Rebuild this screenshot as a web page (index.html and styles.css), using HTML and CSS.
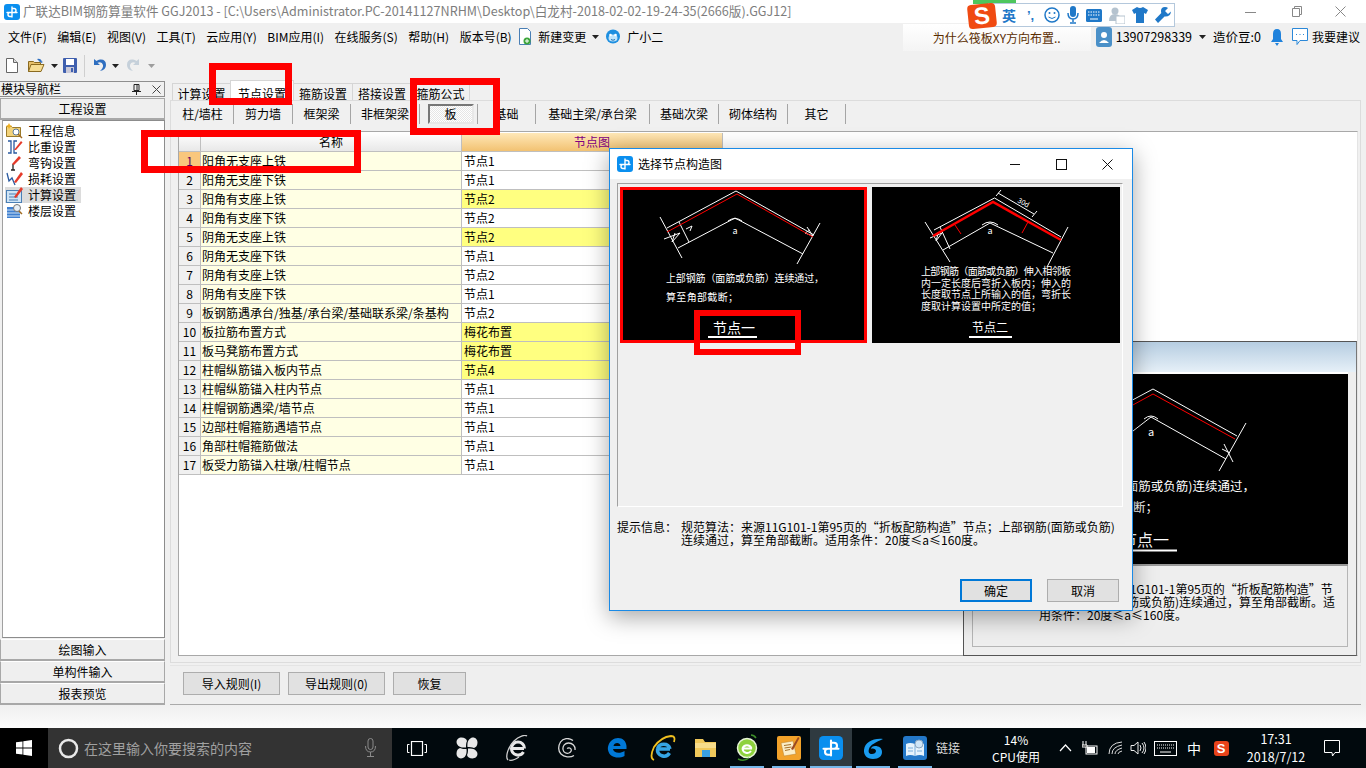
FILE: index.html
```html
<!DOCTYPE html>
<html lang="zh-CN">
<head>
<meta charset="utf-8">
<title>广联达BIM钢筋算量软件</title>
<link rel="stylesheet" href="styles.css">
</head>
<body>
<svg class="defs" aria-hidden="true">
  <symbol id="app" viewBox="0 0 16 16">
    <rect x="0" y="0" width="16" height="16" rx="3" fill="#0a8fef"/>
    <path d="M8 3v10M3 8.500h10M8 4.500h2a1.800 1.800 0 0 1 0 4M8 8.500H6a1.800 1.800 0 0 0 0 4h2" fill="none" stroke="#fff" stroke-width="1.400" stroke-linecap="round"/>
  </symbol>
  <symbol id="caret" viewBox="0 0 7 4"><path d="M0 0h7L3.500 4z" fill="#222"/></symbol>
</svg>
<div class="app">
  <header class="title">
    <svg class="ti-icon" width="16" height="16"><use href="#app"/></svg>
    <span class="ti-text">广联达BIM钢筋算量软件 GGJ2013 - [C:\Users\Administrator.PC-20141127NRHM\Desktop\白龙村-2018-02-02-19-24-35(2666版).GGJ12]</span>
    <span class="winbtns">
      <svg width="12" height="12"><path d="M0 6.500h11" stroke="#888"/></svg>
      <svg width="12" height="12"><path d="M2.500 2.500h7v8h-7zM4.500 2.500v-2h7v8h-2" fill="none" stroke="#888"/></svg>
      <svg width="12" height="12"><path d="M.5.500l10 10M10.500.500l-10 10" stroke="#888"/></svg>
    </span>
  </header>

  <nav class="menu">
    <span class="m">文件(F)</span><span class="m">编辑(E)</span><span class="m">视图(V)</span><span class="m">工具(T)</span><span class="m">云应用(Y)</span><span class="m">BIM应用(I)</span><span class="m">在线服务(S)</span><span class="m">帮助(H)</span><span class="m">版本号(B)</span>
    <svg class="m-ic1" width="14" height="18" viewBox="0 0 14 18"><path d="M1.500.500h8l3 3v13h-11z" fill="#fff" stroke="#4a7fb5"/><circle cx="9" cy="13" r="3.500" fill="#3da53a"/><path d="M9 11v4M7 13h4" stroke="#fff"/></svg>
    <span class="m-new">新建变更</span>
    <svg class="m-caret" width="7" height="4"><use href="#caret"/></svg>
    <svg class="m-ic2" width="16" height="16" viewBox="0 0 16 16"><circle cx="8" cy="7.500" r="7" fill="#1e8fe0"/><ellipse cx="8" cy="9" rx="4.500" ry="3.500" fill="#bfe4fb"/><circle cx="5.500" cy="6" r="1.300" fill="#fff"/><circle cx="10.500" cy="6" r="1.300" fill="#fff"/><path d="M6 10.500q2 1.500 4 0" stroke="#1e6fb0" fill="none"/></svg>
    <span class="m-gxe">广小二</span>
    <div class="m-right">
      <div class="ask">为什么筏板XY方向布置..</div>
      <svg class="m-user" width="16" height="20" viewBox="0 0 16 20"><rect width="16" height="20" rx="3" fill="#4a90c8"/><circle cx="8" cy="8" r="3" fill="#fff"/><path d="M3 16q5-6 10 0z" fill="#fff"/></svg>
      <span class="m-phone">13907298339</span>
      <svg class="m-caret2" width="7" height="4"><use href="#caret"/></svg>
      <span class="m-bean">造价豆:0</span>
      <svg class="m-bell" width="14" height="18" viewBox="0 0 14 18"><path d="M7 1q4 0 4 5v5l2 3H1l2-3V6q0-5 4-5zM5 15h4l-2 3z" fill="#1f82dc"/></svg>
      <svg class="m-chat" width="16" height="18" viewBox="0 0 16 18"><path d="M.5.500h15v12H8l-3 4v-4H.5z" fill="#fff" stroke="#2b88d8"/><path d="M4 6.500h1M7.500 6.500h1M11 6.500h1" stroke="#2b88d8"/></svg>
      <span class="m-sug">我要建议</span>
    </div>
  </nav>

  <div class="tools">
    <svg class="t1" width="12" height="15" viewBox="0 0 12 15"><path d="M.5.500h7l4 4v10H.5z" fill="#fff" stroke="#666"/><path d="M7.500.500v4h4" fill="#ddd" stroke="#666"/></svg>
    <svg class="t2" width="17" height="15" viewBox="0 0 17 15"><path d="M.5 3.500h5l1 1h6v9H.5z" fill="#e7c06a" stroke="#8a6a20"/><path d="M3 6.500h13l-3 7H.5z" fill="#f6dd94" stroke="#8a6a20"/><path d="M9 1q4-1 5 3l1-1-1 2-2-1z" fill="#2f6fc0"/></svg>
    <svg class="t-c1" width="7" height="4"><use href="#caret"/></svg>
    <svg class="t3" width="14" height="15" viewBox="0 0 14 15"><rect width="14" height="15" rx="1" fill="#3f5fae"/><rect x="3" y="1" width="8" height="6" fill="#fff"/><rect x="3" y="9" width="8" height="6" fill="#c9c9d8"/><rect x="8" y="10" width="2" height="4" fill="#3f5fae"/></svg>
    <span class="t-sep"></span>
    <svg class="t4" width="13" height="15" viewBox="0 0 13 15"><path d="M1 1v6h6L4.500 4.800Q9 3 10 7q.5 3-3 6 6-1 6-6 0-6-6-5.500-2 .2-3.500 1.500z" fill="#2f6fc0"/></svg>
    <svg class="t-c2" width="7" height="4"><use href="#caret"/></svg>
    <svg class="t5" width="13" height="15" viewBox="0 0 13 15"><path d="M12 1v6H6l2.500-2.200Q4 3 3 7q-.5 3 3 6-6-1-6-6 0-6 6-5.500 2 .2 3.500 1.500z" fill="#c5d0da"/></svg>
    <svg class="t-c3" width="7" height="4"><use href="#caret"/></svg>
  </div>

  <main class="main">
    <aside class="side">
      <div class="s-head"><span>模块导航栏</span>
        <svg class="s-pin" width="9" height="11" viewBox="0 0 9 11"><path d="M2 .500h5v6H2zM0 7.500h9M4.500 7.500V11M5 1v5" fill="none" stroke="#222"/></svg>
        <svg class="s-x" width="9" height="9" viewBox="0 0 9 9"><path d="M.5.500l8 8M8.500.500l-8 8" stroke="#444"/></svg>
      </div>
      <div class="s-btn s-top">工程设置</div>
      <ul class="s-list">
        <li class="s-it"><svg width="17" height="16" viewBox="0 0 17 16"><path d="M.5 3.500h5l1 1h8v9H.5z" fill="#f2d27a" stroke="#9a7a2a"/><circle cx="10" cy="9" r="3" fill="#fff" stroke="#5c7a9a"/><path d="M12 11l4 4" stroke="#a06a20" stroke-width="1.500"/><path d="M3 0l1 2 2 1-2 1-1 2-1-2-2-1 2-1z" fill="#f0b020"/></svg><span>工程信息</span></li>
        <li class="s-it"><svg width="17" height="16" viewBox="0 0 17 16"><path d="M2 2h3v12H2M11 14H8V2h3" fill="none" stroke="#2a5aa0" stroke-width="1.300"/><path d="M8 11L15 2l1.500 1.500L10 11z" fill="#e53a2a"/></svg><span>比重设置</span></li>
        <li class="s-it"><svg width="17" height="16" viewBox="0 0 17 16"><path d="M7 15V9M5 15h4" stroke="#222" stroke-width="1.300"/><path d="M6 9L13 1l2 2-7 7z" fill="#e53a2a"/></svg><span>弯钩设置</span></li>
        <li class="s-it"><svg width="17" height="16" viewBox="0 0 17 16"><path d="M1 2l2 8 3-3 3 7" fill="none" stroke="#2a5aa0" stroke-width="1.300"/><path d="M8 11L15 1l2 2-7 9z" fill="#e53a2a"/></svg><span>损耗设置</span></li>
        <li class="s-it s-sel"><svg width="17" height="16" viewBox="0 0 17 16"><rect x=".5" y="3.500" width="15" height="12" fill="#cfe4f5" stroke="#4a7fb5"/><path d="M3 7h7M3 10h9M3 13h9" stroke="#4a7fb5"/><path d="M8 10L15 0l2 2-7 9z" fill="#e53a2a"/></svg><span>计算设置</span></li>
        <li class="s-it"><svg width="17" height="16" viewBox="0 0 17 16"><path d="M1 4h13v11H1z" fill="#3f7fd0"/><path d="M1 7h13M1 10h13M1 13h13" stroke="#cfe4f5"/><circle cx="11" cy="5" r="3.500" fill="#e7eef5" stroke="#777"/><path d="M13 8l3 3" stroke="#a06a20" stroke-width="1.500"/></svg><span>楼层设置</span></li>
      </ul>
      <div class="s-btn">绘图输入</div>
      <div class="s-btn">单构件输入</div>
      <div class="s-btn">报表预览</div>
    </aside>

    <section class="content">
      <div class="tabs">
        <span class="tab t-a">计算设置</span><span class="tab t-b on">节点设置</span><span class="tab t-c">箍筋设置</span><span class="tab t-d">搭接设置</span><span class="tab t-e">箍筋公式</span>
      </div>
      <div class="panel">
        <div class="subs">
          <span class="sub w62">柱/墙柱</span><span class="sub w59">剪力墙</span><span class="sub w58">框架梁</span><span class="sub w69">非框架梁</span><span class="sub w58"><b class="press">板</b></span><span class="sub w58">基础</span><span class="sub w114">基础主梁/承台梁</span><span class="sub w69">基础次梁</span><span class="sub w69">砌体结构</span><span class="sub w58">其它</span>
        </div>
        <div class="work">
          <div class="grid">
            <div class="g-row g-head"><span class="c-n"></span><span class="c-name">名称</span><span class="c-val">节点图</span></div>
            <div class="g-row cur"><span class="c-n">1</span><span class="c-name">阳角无支座上铁</span><span class="c-val">节点1</span></div>
            <div class="g-row"><span class="c-n">2</span><span class="c-name">阳角无支座下铁</span><span class="c-val">节点1</span></div>
            <div class="g-row hl"><span class="c-n">3</span><span class="c-name">阳角有支座上铁</span><span class="c-val">节点2</span></div>
            <div class="g-row"><span class="c-n">4</span><span class="c-name">阳角有支座下铁</span><span class="c-val">节点2</span></div>
            <div class="g-row hl"><span class="c-n">5</span><span class="c-name">阴角无支座上铁</span><span class="c-val">节点2</span></div>
            <div class="g-row"><span class="c-n">6</span><span class="c-name">阴角无支座下铁</span><span class="c-val">节点1</span></div>
            <div class="g-row"><span class="c-n">7</span><span class="c-name">阴角有支座上铁</span><span class="c-val">节点2</span></div>
            <div class="g-row"><span class="c-n">8</span><span class="c-name">阴角有支座下铁</span><span class="c-val">节点1</span></div>
            <div class="g-row"><span class="c-n">9</span><span class="c-name">板钢筋遇承台/独基/承台梁/基础联系梁/条基构</span><span class="c-val">节点2</span></div>
            <div class="g-row hl"><span class="c-n">10</span><span class="c-name">板拉筋布置方式</span><span class="c-val">梅花布置</span></div>
            <div class="g-row hl"><span class="c-n">11</span><span class="c-name">板马凳筋布置方式</span><span class="c-val">梅花布置</span></div>
            <div class="g-row hl"><span class="c-n">12</span><span class="c-name">柱帽纵筋锚入板内节点</span><span class="c-val">节点4</span></div>
            <div class="g-row"><span class="c-n">13</span><span class="c-name">柱帽纵筋锚入柱内节点</span><span class="c-val">节点1</span></div>
            <div class="g-row"><span class="c-n">14</span><span class="c-name">柱帽钢筋遇梁/墙节点</span><span class="c-val">节点1</span></div>
            <div class="g-row"><span class="c-n">15</span><span class="c-name">边部柱帽箍筋遇墙节点</span><span class="c-val">节点1</span></div>
            <div class="g-row"><span class="c-n">16</span><span class="c-name">角部柱帽箍筋做法</span><span class="c-val">节点1</span></div>
            <div class="g-row"><span class="c-n">17</span><span class="c-name">板受力筋锚入柱墩/柱帽节点</span><span class="c-val">节点1</span></div>
          </div>
          <div class="preview">
            <div class="pv-bar"></div>
            <div class="pv-img">
              <svg class="pv-svg" width="376" height="192" viewBox="0 0 376 192">
                <g fill="none" stroke="#fff">
                  <path d="M60 80L181 15 265 62"/>
                  <path d="M80 120L179 43 254 85"/>
                  <path d="M274 49L247 97M252 70l9 18M250 75l8 4"/>
                  <path d="M172 45q7-6 14 0"/>
                </g>
                <path d="M60 86L181 20 263 65" fill="none" stroke="#f00"/>
                <text class="d-t" x="179" y="62" text-anchor="middle" font-size="11">a</text>
                <text class="d-t" x="283" y="117" text-anchor="end" font-size="12.500">上部钢筋(面筋或负筋)连续通过&#xFF0C;</text>
                <text class="d-t" x="186" y="138" text-anchor="end" font-size="12.500">算至角部截断&#xFF1B;</text>
                <text class="d-t" x="197" y="172" text-anchor="end" font-size="16">节点一</text>
                <path d="M115 176.500h90" stroke="#fff" stroke-width="2"/>
              </svg>
            </div>
            <div class="pv-text">规范算法&#xFF1A;来源11G101-1第95页的“折板配筋构造”节<br>点&#xFF1B;上部钢筋(面筋或负筋)连续通过&#xFF0C;算至角部截断。适<br>用条件&#xFF1A;20度≤a≤160度。</div>
          </div>
        </div>
      </div>
      <div class="bottom">
        <button class="b-btn w97">导入规则(I)</button>
        <button class="b-btn w97">导出规则(0)</button>
        <button class="b-btn w73">恢复</button>
      </div>
    </section>
  </main>

  <div class="tail"></div>

  <footer class="taskbar">
    <div class="tk-start"><svg width="16" height="16" viewBox="0 0 16 16"><path d="M0 2.300l6.500-.9v6.200H0zM7.300 1.300L16 0v7.600H7.300zM0 8.400h6.500v6.200L0 13.700zM7.300 8.400H16V16l-8.700-1.300z" fill="#fff"/></svg></div>
    <div class="tk-search">
      <svg width="21" height="21" viewBox="0 0 21 21"><circle cx="10.500" cy="10.500" r="8.500" fill="none" stroke="#e8e8e8" stroke-width="2.500"/></svg>
      <span class="tk-q">在这里输入你要搜索的内容</span>
      <svg class="tk-mic" width="11" height="20" viewBox="0 0 11 20"><rect x="3" y=".5" width="5" height="11" rx="2.500" fill="none" stroke="#8a8a8a"/><path d="M.5 8q0 6 5 6t5-6M5.500 14v4M2 18.500h7" fill="none" stroke="#8a8a8a"/></svg>
    </div>
    <div class="tb wide"><svg width="20" height="15" viewBox="0 0 20 15"><rect x="4.500" y=".5" width="11" height="14" fill="none" stroke="#fff" stroke-width="1.200"/><path d="M2.500 3.500H.5v8h2M17.500 3.500h2v8h-2" fill="none" stroke="#fff"/></svg></div>
    <div class="tb wide"><svg width="22" height="22" viewBox="0 0 22 22"><path d="M10 10.500C6 11 2.500 10 1 7 -.5 3.500 2 .5 5.500.5c3 0 5 1.500 5.500 3.500C10 6 10 8 10 10.500z" fill="#e8e8e8"/><path d="M11.500 10C11 6 12 2.500 15 1c3.500-1.500 6.500 1 6.500 4.500 0 3-1.500 5-3.500 5.500-2-1-4-1-6.500-1z" fill="#e8e8e8"/><path d="M12 11.500c4-.5 7.500.5 9 3.500 1.500 3.500-1 6.500-4.500 6.500-3 0-5-1.500-5.500-3.500 1-2 1-4 1-6.500z" fill="#e8e8e8"/><path d="M10.500 12c.5 4-.5 7.500-3.500 9-3.500 1.500-6.500-1-6.500-4.500 0-3 1.500-5 3.500-5.500 2 1 4 1 6.500 1z" fill="#e8e8e8"/></svg></div>
    <div class="tb wide"><svg width="22" height="26" viewBox="0 0 22 26"><path d="M5 13.500h13M5.500 13.500a6.500 6.500 0 0 1 13 0M5.500 13.500a6.500 6.500 0 0 0 12 3.500" fill="none" stroke="#e8e8e8" stroke-width="3"/><path d="M2 25C-1 22 2 12 8 6 13 1 19-.5 21 1M3 25c3 1 7-1 10-3" fill="none" stroke="#d0d0d0" stroke-width="1.300"/></svg></div>
    <div class="tb wide"><svg width="20" height="20" viewBox="0 0 20 20"><path d="M16 2.500C12-.5 6 0 3.500 4S1 13 4 16s9 4 13 1.500M18 12c.5-4-2.500-7-6.500-7-3.500 0-6 3-5.500 6.500.5 3 3.500 4.500 6 3.500 1.800-.7 2.800-2.500 2-4-.8-1.300-3-1.500-3.800-.3" fill="none" stroke="#d8d8d8" stroke-width="1.300"/></svg></div>
    <div class="tb wide"><svg width="20" height="20" viewBox="0 0 20 20"><path d="M1 9C2 3 7 0 11 0c5 0 8 3 8.500 8v3H6c.3 4 7 5 11.500 2v5c-6 3-15 2-16.500-6-.2-1.500-.2-2 0-3zm5.500-1h7c-.2-4-6.500-4-7 0z" fill="#0078d7"/></svg></div>
    <div class="tb"><svg width="26" height="26" viewBox="0 0 26 26"><path d="M7 14h13M7.500 14a6.500 6.500 0 0 1 12.500 0M7.500 14a6.500 6.500 0 0 0 12 4" fill="none" stroke="#35a5e5" stroke-width="3.500"/><path d="M4 25Q-1 23 4 12 11 2 21 1q5 0 3 6" fill="none" stroke="#f0c020" stroke-width="1.800"/></svg></div>
    <div class="tb"><svg width="23" height="20" viewBox="0 0 23 20"><path d="M1 1h8l2 3h11v15H1z" fill="#f0c85a"/><rect x="8" y="12" width="8" height="7" fill="#3aa0e0"/><rect x="1" y="5" width="21" height="5" fill="#f7dc8a"/></svg></div>
    <div class="tb open"><svg width="22" height="28" viewBox="0 0 22 28"><circle cx="11" cy="14" r="9.500" fill="#8ed23e" stroke="#e8f5d8" stroke-width="1.500"/><path d="M6 14.500h10M6.500 14.500a4.700 4.700 0 0 1 9 0M6.500 14.500a4.700 4.700 0 0 0 8.500 2.500" fill="none" stroke="#fff" stroke-width="2"/><path d="M2 25q6 3 11-1M15 1q3 0 5 3" fill="none" stroke="#3e8e2a" stroke-width="1.500"/></svg></div>
    <div class="tb open"><svg width="24" height="24" viewBox="0 0 24 24"><rect width="24" height="24" rx="2" fill="#f2a22a"/><path d="M4 7l12-2 3 13-12 2z" fill="#fbeec8" stroke="#b8812a" stroke-width=".5"/><path d="M7 9.500l7-1M7.500 12l7-1M8 14.500l5-1" stroke="#a5702a"/><path d="M14 13L21 1l1.500 1L16 14z" fill="#9c4a20"/></svg></div>
    <div class="tb open act"><svg width="24" height="24"><use href="#app"/></svg></div>
    <div class="tb open"><svg width="24" height="24" viewBox="0 0 24 24"><path d="M22 3C12 2 4 6 3 14c-.5 5 3 9 9 9 6 0 9-3 9-7 0-4-3-6-7-6-2 0-4 1-4 3 2-1 5 0 5 2 0 2-2 3-4 3-3 0-4-2-3-5 1-4 7-7 14-10z" fill="#1a9cf0"/></svg></div>
    <div class="tb open"><svg width="24" height="24" viewBox="0 0 24 24"><rect width="24" height="24" rx="3" fill="#2478c8"/><path d="M3 8q4-2 9 0 5-2 9 0v12q-4-2-9 0-5-2-9 0z" fill="#e6f3fc"/><path d="M12 8v12" stroke="#7aaedc"/><path d="M5 12h5M5 15h5M14 15h5" stroke="#7aaedc"/><circle cx="16" cy="8" r="4" fill="#cfe6f8" stroke="#8fa8c0"/></svg></div>
    <div class="tray-link">链接</div>
    <div class="tray-cpu"><div>14%</div><div>CPU使用</div></div>
    <div class="ty w24"><svg width="13" height="8" viewBox="0 0 13 8"><path d="M1 7l5.500-6L12 7" fill="none" stroke="#fff" stroke-width="1.200"/></svg></div>
    <div class="ty w26"><svg width="16" height="14" viewBox="0 0 16 14"><rect x="4" y="5" width="11" height="8" fill="none" stroke="#fff"/><rect x="5" y="6" width="8" height="6" fill="#fff"/><path d="M1 0v4M4 0v4M0 4h5v2H0z" stroke="#fff"/></svg></div>
    <div class="ty w26"><svg width="16" height="14" viewBox="0 0 16 14"><path d="M1 13Q1 2 14 1M4 13Q4 6 14 4M7 13Q7 9 14 7M10 13q0-2 4-3" fill="none" stroke="#ddd"/></svg></div>
    <div class="ty w18"><svg width="16" height="14" viewBox="0 0 16 14"><path d="M1 4.500h3L8 1v12L4 9.500H1zM10 4q2 3 0 6M12 2q4 5 0 10M14 1q4 6 0 12" fill="none" stroke="#eee"/></svg></div>
    <div class="ty w36"><svg width="23" height="15" viewBox="0 0 23 15"><rect x=".5" y=".5" width="22" height="14" fill="none" stroke="#fff"/><path d="M3 4h17M3 7h17" stroke="#fff" stroke-dasharray="1 1"/><path d="M6 11h11" stroke="#fff"/></svg></div>
    <div class="ty w22 zh">中</div>
    <div class="ty w32"><span class="tk-s">S</span></div>
    <div class="clock"><div>17:31</div><div>2018/7/12</div></div>
    <div class="ty w34"><svg width="16" height="17" viewBox="0 0 16 17"><path d="M.5.500h15v12H11L8.500 16 8 12.500H.5z" fill="none" stroke="#fff"/></svg></div>
  </footer>
</div>

<section class="dialog">
  <div class="d-title">
    <svg width="16" height="16"><use href="#app"/></svg>
    <span class="d-name">选择节点构造图</span>
    <span class="d-btns">
      <svg width="11" height="11"><path d="M0 5.500h10" stroke="#111"/></svg>
      <svg width="11" height="11"><rect x=".5" y=".5" width="10" height="10" fill="none" stroke="#111"/></svg>
      <svg width="11" height="11"><path d="M.5.500l10 10M10.500.500l-10 10" stroke="#111"/></svg>
    </span>
  </div>
  <div class="d-body">
    <div class="d-list">
      <div class="thumb sel">
        <svg width="241" height="150" viewBox="3 3 241 150">
          <g fill="none" stroke="#fff">
            <path d="M47 41L116 4 194 48"/>
            <path d="M58 61L115 31 183 67"/>
            <path d="M40 30L62 71M200 36L177 77"/>
            <path d="M59 35l10 20M108 34q7-5 14 0"/>
            <path d="M44 52l16-6-8 9 3-9M187 40l6 9-8-3 5-3M66 42l6-3-2 5"/>
          </g>
          <path d="M47 45L117 7 193 50" fill="none" stroke="#f00"/>
          <text class="d-t" x="115" y="47" text-anchor="middle" font-size="9">a</text>
          <text class="d-t" x="46" y="95" font-size="10" textLength="158">上部钢筋&#xFF08;面筋或负筋&#xFF09;连续通过&#xFF0C;</text>
          <text class="d-t" x="46" y="114" font-size="10" textLength="72">算至角部截断&#xFF1B;</text>
          <text class="d-t" x="93" y="146" font-size="14">节点一</text>
          <path d="M88 150h49" stroke="#fff" stroke-width="2"/>
        </svg>
      </div>
      <div class="thumb">
        <svg width="248" height="156" viewBox="0 0 248 156">
          <g fill="none" stroke="#fff">
            <path d="M62 43L122.500 11 189 50"/>
            <path d="M71 63L118 36 181 66"/>
            <path d="M53 35L78 75M196 40L175 80"/>
            <path d="M126 6l36 21M129 3l-5 6M165 24l-5 6M68 40l10 22M110 38q8-6 16 0"/>
            <path d="M58 51l12-5-6 8 2-7"/>
          </g>
          <path d="M61 49L121 15 189 53" fill="none" stroke="#f00" stroke-width="2.500"/>
          <path d="M83 38l6 9M156 35l-6 11" fill="none" stroke="#f00"/>
          <text class="d-t" x="118" y="47" text-anchor="middle" font-size="9">a</text>
          <text class="d-t" x="145" y="15" font-size="7" transform="rotate(28 145 15)">30d</text>
          <text class="d-t" x="49" y="88" font-size="10" textLength="150">上部钢筋&#xFF08;面筋或负筋&#xFF09;伸入相邻板</text>
          <text class="d-t" x="49" y="99.500" font-size="10" textLength="150">内一定长度后弯折入板内&#xFF1B;伸入的</text>
          <text class="d-t" x="49" y="111" font-size="10" textLength="150">长度取节点上所输入的值&#xFF0C;弯折长</text>
          <text class="d-t" x="49" y="122.500" font-size="10" textLength="120">度取计算设置中所定的值&#xFF1B;</text>
          <text class="d-t" x="100" y="145" font-size="12">节点二</text>
          <path d="M97 150h43" stroke="#fff" stroke-width="2"/>
        </svg>
      </div>
    </div>
    <div class="d-hint">
      <span class="d-label">提示信息&#xFF1A;</span>
      <span class="d-msg">规范算法&#xFF1A;来源11G101-1第95页的“折板配筋构造”节点&#xFF1B;上部钢筋(面筋或负筋)<br>连续通过&#xFF0C;算至角部截断。适用条件&#xFF1A;20度≤a≤160度。</span>
    </div>
    <div class="d-foot">
      <button class="d-btn ok">确定</button>
      <button class="d-btn">取消</button>
    </div>
  </div>
</section>

<div class="mark m1"></div>
<div class="mark m2"></div>
<div class="mark m3"></div>
<div class="mark m4"></div>

<div class="sogou">
  <span class="sg-green"></span>
  <span class="sg-logo">S</span>
  <span class="sg-bar">
    <b class="sg-en">英</b>
    <b class="sg-p">&#8217;,</b>
    <svg width="16" height="16" viewBox="0 0 16 16"><circle cx="8" cy="8" r="7" fill="#fff" stroke="#1f78c8" stroke-width="1.500"/><circle cx="5.500" cy="6" r="1" fill="#1f78c8"/><circle cx="10.500" cy="6" r="1" fill="#1f78c8"/><path d="M4.500 10q3.500 3 7 0" fill="none" stroke="#1f78c8"/></svg>
    <svg width="12" height="18" viewBox="0 0 12 18"><rect x="3" y="0" width="6" height="11" rx="3" fill="#1f78c8"/><path d="M1 7q0 6 5 6t5-6M6 13v3M3 17h6" fill="none" stroke="#1f78c8" stroke-width="1.500"/></svg>
    <svg width="16" height="13" viewBox="0 0 16 13"><rect width="16" height="13" rx="1.500" fill="#1f78c8"/><path d="M2 3h12M2 6h12" stroke="#fff" stroke-dasharray="1.500 1"/><path d="M4 10h8" stroke="#fff"/></svg>
    <svg width="16" height="17" viewBox="0 0 16 17"><circle cx="6" cy="4" r="3.500" fill="#b5c3cf"/><path d="M0 14q0-7 6-7t6 7z" fill="#b5c3cf"/><rect x="7" y="9" width="9" height="8" fill="#fff" stroke="#b5c3cf"/></svg>
    <svg width="16" height="16" viewBox="0 0 16 16"><path d="M5 0L0 3l2 4 2-1v10h8V6l2 1 2-4-5-3q-3 2-6 0z" fill="#1f78c8"/></svg>
    <svg width="16" height="16" viewBox="0 0 16 16"><path d="M10 0q-4 0-4 4 0 1 .3 2L0 12.500 3 16l6.500-6.500q6 .5 6.500-5l-3 2.500-3-3 3-3q-1-1-3-1z" fill="#1f78c8"/></svg>
  </span>
</div>
</body>
</html>
```

FILE: styles.css
```css
* { box-sizing: border-box; }
html, body { margin: 0; padding: 0; }
body {
  width: 1366px; height: 768px; overflow: hidden; position: relative;
  background: #f0f0f0; color: #000;
  font: 12px/1 "Noto Sans CJK SC", "Liberation Sans", sans-serif;
}
.defs { position: absolute; width: 0; height: 0; }
svg { display: block; flex: none; }
.app { display: flex; flex-direction: column; height: 768px; }

/* title */
.title { height: 23px; background: #fff; display: flex; align-items: center; padding-left: 4px; flex: none; }
.ti-text { margin-left: 3px; color: #7d7d7d; font-size: 12.6px; white-space: nowrap; }
.winbtns { margin-left: auto; display: flex; gap: 33px; padding-right: 19px; }

/* menu */
.menu { height: 28px; display: flex; align-items: center; padding-left: 8px; flex: none; background: #f0f0f0; }
.m { margin-right: 10.5px; white-space: nowrap; }
.m-ic1 { margin-left: -4px; }
.m-new { margin-left: 6px; }
.m-caret { margin-left: 6px; }
.m-ic2 { margin-left: 6px; }
.m-gxe { margin-left: 6px; }
.m-right { margin-left: auto; display: flex; align-items: center; height: 28px; padding-right: 6px; }
.ask { width: 188px; height: 27px; background: linear-gradient(#fff, #f4f4f4); color: #5a2d00; font-size: 12px; text-align: center; line-height: 27px; }
.m-user { margin-left: 5px; }
.m-phone { margin-left: 4px; font-size: 12.5px; }
.m-caret2 { margin-left: 7px; }
.m-bean { margin-left: 7px; font-size: 12.5px; }
.m-bell { margin-left: 9px; }
.m-chat { margin-left: 8px; }
.m-sug { margin-left: 4px; font-size: 12px; }

/* toolbar */
.tools { height: 29px; display: flex; align-items: center; padding-left: 6px; flex: none; }
.t2 { margin-left: 10px; }
.t-c1 { margin-left: 6px; }
.t3 { margin-left: 5px; }
.t-sep { width: 1px; height: 22px; background: #cfcfcf; margin-left: 7px; }
.t4 { margin-left: 8px; }
.t-c2 { margin-left: 6px; }
.t5 { margin-left: 8px; }
.t-c3 { margin-left: 8px; opacity: .4; }

/* main */
.main { flex: 1; display: flex; min-height: 0; }
.side { width: 165px; flex: none; display: flex; flex-direction: column; padding: 1px 0 1px; }
.s-head { height: 16px; display: flex; align-items: center; border: 1px solid #8e8e8e; border-left: 0; padding-left: 1px; margin-bottom: 1px; }
.s-pin { margin-left: auto; }
.s-x { margin: 0 3px 0 11px; }
.s-btn { height: 22px; flex: none; display: flex; align-items: center; justify-content: center; border: 1px solid #a8a8a8; border-top-color: #fff; background: #efefef; box-shadow: inset 0 -1px 0 #a8a8a8; }
.s-top { border-top-color: #a8a8a8; }
.s-list { flex: 1; margin: 0 0 1px 2px; padding: 2px 2px; list-style: none; background: #fff; border: 1px solid #8c8c8c; border-left-color: #a0a0a0; width: 163px; }
.s-it { height: 16px; display: flex; align-items: center; gap: 5px; padding-left: 1px; width: 76px; white-space: nowrap; }
.s-sel { background: #dcdcdc; }

.content { flex: 1; min-width: 0; display: flex; flex-direction: column; padding: 0 5px 1px; }
.tabs { height: 20px; display: flex; align-items: flex-end; padding-left: 2px; flex: none; }
.tab { height: 17px; display: flex; align-items: center; justify-content: center; background: #f0f0f0; border: 1px solid #d5d5d5; border-bottom: 0; margin-right: -1px; padding-top: 3px; }
.t-a { width: 59px; } .t-b { width: 64px; } .t-c { width: 60px; } .t-d { width: 60px; } .t-e { width: 59px; }
.tab.on { background: #fff; height: 20px; padding-top: 6px; }
.panel { height: 563px; flex: none; border: 1px solid #dcdcdc; display: flex; flex-direction: column; padding: 3px 2px 0 0; }
.subs { height: 20px; display: flex; background: #f0f0f0; margin-left: 1px; flex: none; }
.sub { display: flex; align-items: center; justify-content: center; border-right: 1px solid #a5a5a5; height: 20px; font-size: 12px; }
.w58 { width: 58px; } .w59 { width: 59px; } .w62 { width: 62px; } .w69 { width: 69px; } .w114 { width: 114px; }
.press { font-weight: 400; width: 46px; height: 20px; margin-left: 4px; border: 2px solid #777; border-color: #777 #e8e8e8 #e8e8e8 #777; background: repeating-conic-gradient(#fff 0 25%, #e6e6e6 0 50%) 0 0 / 2px 2px; display: flex; align-items: center; justify-content: center; }

.work { flex: none; height: 525px; margin: 7px 0 0 7px; background: #fff; border: 1px solid #a8a8a8; border-right-color: #e4e4e4; display: flex; align-items: flex-end; justify-content: space-between; }
.grid { align-self: flex-start; margin-top: 1px; width: 544px; }
.g-row { display: flex; height: 19px; }
.g-row span { display: flex; align-items: center; border-right: 1px solid #bfbfbf; border-bottom: 1px solid #bfbfbf; white-space: nowrap; }
.c-n { width: 22px; justify-content: center; background: #f0f0f0; }
.c-name { width: 261px; padding-left: 1px; background: #ffffe4; }
.c-val { width: 261px; padding-left: 2px; background: #fff; }
.g-head span { background: linear-gradient(#fff, #e8e8e8); justify-content: center; }
.g-head .c-name { padding-left: 0; }
.g-head .c-val { background: linear-gradient(#ffe8b8, #f2c272); color: #800080; padding: 0; }
.hl .c-val { background: linear-gradient(90deg, #ffff80, #ffff80 85%, #f0f0a0); }
.cur .c-n { background: #f9c77d; color: #600060; }

.preview { width: 394px; height: 315px; border: 1px solid #555; border-right-color: #777; background: #eee; display: flex; flex-direction: column; margin-bottom: -1px; }
.pv-bar { height: 30px; background: linear-gradient(#b6cde1, #e6f0f8); flex: none; }
.pv-img { height: 194px; flex: none; background: #000; border-top: 2px solid #fff; margin: 0 8px; border-bottom: 2px solid #999; }
.pv-text { margin: 0 8px 8px; padding: 16px 0 0 66px; flex: 1; line-height: 13px; white-space: nowrap; border: 1px solid #b5b5b5; border-top: 0; background: #eee; }
.d-t { fill: #fff; font-family: "Noto Sans CJK SC", sans-serif; }

.bottom { height: 40px; margin-top: 2px; flex: none; border-top: 1px solid #e4e4e4; border-bottom: 1px solid #aaa; background: #efefef; display: flex; align-items: flex-start; gap: 8px; padding: 6px 0 0 13px; }
.b-btn { height: 23px; padding: 0; background: #e1e1e1; border: 1px solid #adadad; font: inherit; }
.w97 { width: 97px; } .w73 { width: 73px; }

.tail { height: 22px; flex: none; background: linear-gradient(#f0f0f0, #fcfcfc); }

/* taskbar */
.taskbar { height: 40px; flex: none; background: #01090d; display: flex; align-items: center; color: #fff; }
.tk-start { width: 48px; height: 40px; background: #000; display: flex; align-items: center; justify-content: center; }
.tk-search { width: 344px; height: 40px; background: #333; display: flex; align-items: center; padding-left: 10px; color: #a0a0a0; }
.tk-q { margin-left: 5px; font-size: 14px; }
.tk-mic { margin-left: auto; margin-right: 16px; }
.tb { width: 42px; height: 40px; display: flex; align-items: center; justify-content: center; position: relative; flex: none; }
.tb.wide { width: 50px; }
.tb.open::after { content: ""; position: absolute; left: 4px; right: 4px; bottom: 0; height: 2px; background: #75b7ea; }
.tb.act { background: #2f3a40; }
.tb.act::after { left: 0; right: 0; }
.tray-link { width: 22px; font-size: 12px; white-space: nowrap; flex: none; color: #ddd; }
.tray-cpu { width: 52px; margin-left: 32px; text-align: center; flex: none; line-height: 17px; white-space: nowrap; font-size: 12px; }
.ty { height: 40px; display: flex; align-items: center; justify-content: center; flex: none; }
.w24 { width: 24px; margin-left: 11px; } .w26 { width: 26px; } .w18 { width: 18px; } .w36 { width: 36px; } .w22 { width: 22px; } .w32 { width: 32px; } .w34 { width: 34px; }
.zh { font-size: 14px; }
.tk-s { width: 15px; height: 15px; border-radius: 3px; background: #e8431a; color: #fff; font: 700 13px/15px "Liberation Sans", sans-serif; text-align: center; }
.clock { width: 78px; text-align: center; line-height: 18px; flex: none; font-size: 12.5px; white-space: nowrap; }

/* dialog */
.dialog { position: absolute; left: 609px; top: 148px; width: 524px; height: 463px; border: 1px solid #1a8ae6; background: #f0f0f0; box-shadow: 0 6px 22px rgba(0,0,0,.35); display: flex; flex-direction: column; }
.d-title { height: 30px; background: #fff; display: flex; align-items: center; padding-left: 7px; flex: none; }
.d-name { margin-left: 5px; font-size: 12px; }
.d-btns { margin-left: auto; display: flex; gap: 35px; padding-right: 19px; }
.d-body { flex: 1; display: flex; flex-direction: column; }
.d-list { height: 324px; margin: 4px 9px 0 7px; border: 1px solid #a0a0a0; border-right-color: #fff; border-bottom-color: #fff; padding: 3px 2px; display: flex; gap: 5px; align-items: flex-start; flex: none; }
.thumb { width: 248px; height: 156px; background: #000; border: 0 solid #f00; flex: none; }
.thumb.sel { width: 247px; border-width: 3px; }
.d-hint { display: flex; padding: 13px 8px 0 7px; line-height: 13px; }
.d-label { width: 64px; flex: none; }
.d-msg { white-space: nowrap; }
.d-foot { margin-top: auto; display: flex; justify-content: flex-end; gap: 15px; padding: 0 13px 8px 0; }
.d-btn { width: 72px; height: 23px; background: #e1e1e1; border: 1px solid #adadad; font: inherit; padding: 0; }
.d-btn.ok { border: 2px solid #0078d7; }

/* red annotation frames */
.mark { position: absolute; border: 7px solid #f00; }
.m1 { left: 209px; top: 63px; width: 83px; height: 42px; }
.m2 { left: 410px; top: 78px; width: 90px; height: 57px; }
.m3 { left: 141px; top: 130px; width: 220px; height: 43px; }
.m4 { left: 694px; top: 310px; width: 107px; height: 45px; border-width: 6px; }

/* sogou */
.sogou { position: absolute; left: 968px; top: 0; width: 207px; height: 28px; }
.sg-green { position: absolute; left: 5px; top: 0; width: 43px; height: 4px; background: #4dc65d; }
.sg-bar { position: absolute; left: 20px; top: 3px; width: 187px; height: 24px; background: #fff; border: 1px solid #b4c8dc; display: flex; align-items: center; padding-left: 13px; gap: 7px; }
.sg-logo { position: absolute; left: 0; top: 4px; width: 28px; height: 24px; background: #f04a12; border-radius: 4px; color: #fff; font: 700 24px/24px "Liberation Sans", sans-serif; text-align: center; transform: rotate(-6deg); z-index: 1; }
.sg-en { color: #1f78c8; font-size: 14px; margin-right: 4px; }
.sg-p { color: #1f78c8; font-size: 13px; font-family: "Liberation Sans", sans-serif; margin-right: 3px; }
```
